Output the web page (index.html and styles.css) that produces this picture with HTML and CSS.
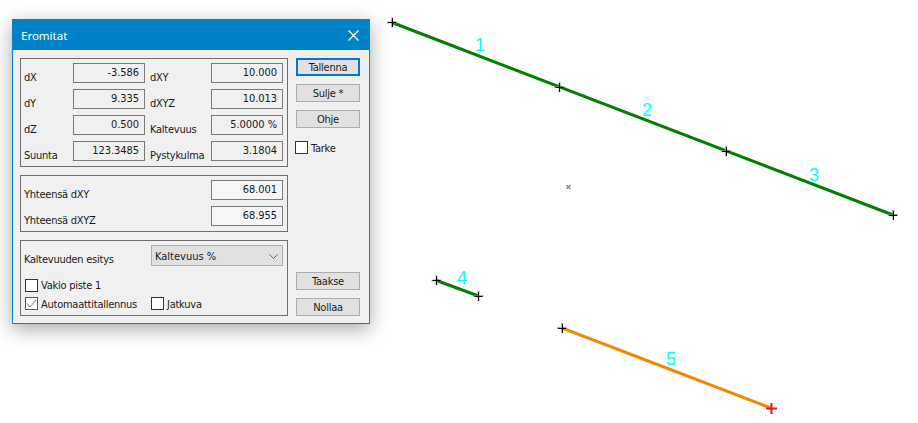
FILE: index.html
```html
<!DOCTYPE html>
<html>
<head>
  <title>Eromitat</title>
  <link rel="stylesheet" href="styles.css">
</head>
<body>
  <!-- drawing behind the dialog -->
  <svg class="drawing" width="918" height="423" viewBox="0 0 918 423">
    <g class="seg-green">
      <line x1="392" y1="22.5" x2="893" y2="215"/>
      <line x1="436.5" y1="280.5" x2="478.5" y2="296"/>
    </g>
    <line class="seg-orange" x1="562" y1="328" x2="771" y2="408"/>
    <path class="mark-soft" d="M387 22.5h10M392 17.5v10M554.5 87h10M559.5 82v10M721 151h10M726 146v10M888 215h10M893 210v10M431.5 280.5h10M436.5 275.5v10M473.5 296h10M478.5 291v10M557 328h10M562 323v10"/>
    <path class="mark" d="M388 22.5h8M392.5 18v9M555.5 87.5h8M559.5 83v9M722 151.5h8M726.5 147v9M889 215.5h8M893.5 211v9M432.5 280.5h8M436.5 276v9M474.5 296.5h8M478.5 292v9M558 328.5h8M562.5 324v9"/>
    <path class="mark-red" d="M766 408.5h11M771.5 403v11"/>
    <path class="mark-x" d="M566.5 185l4 4M570.5 185l-4 4"/>
    <g class="seg-label">
      <text x="480" y="51">1</text>
      <text x="647" y="116">2</text>
      <text x="814" y="181">3</text>
      <text x="462" y="284">4</text>
      <text x="671" y="365">5</text>
    </g>
  </svg>

  <div class="dialog">
    <div class="titlebar">
      <span>Eromitat</span>
      <svg class="close" width="11" height="11" viewBox="0 0 11 11"><path d="M.5.5l10 10M10.5.5l-10 10"/></svg>
    </div>
    <div class="dialog-body">
      <div class="groups">
        <div class="group grid-values">
          <div class="lbl">dX</div><div class="val">-3.586</div>
          <div class="lbl">dXY</div><div class="val">10.000</div>
          <div class="lbl">dY</div><div class="val">9.335</div>
          <div class="lbl">dXYZ</div><div class="val">10.013</div>
          <div class="lbl">dZ</div><div class="val">0.500</div>
          <div class="lbl">Kaltevuus</div><div class="val">5.0000 %</div>
          <div class="lbl">Suunta</div><div class="val">123.3485</div>
          <div class="lbl">Pystykulma</div><div class="val">3.1804</div>
        </div>
        <div class="group grid-totals">
          <div class="lbl">Yhteensä dXY</div><div class="val">68.001</div>
          <div class="lbl">Yhteensä dXYZ</div><div class="val">68.955</div>
        </div>
        <div class="group options">
          <div class="slope-row">
            <div class="slope-label">Kaltevuuden esitys</div>
            <div class="select">
              <span>Kaltevuus %</span>
              <svg width="9" height="5" viewBox="0 0 9 5"><path d="M.5.5l4 4 4-4"/></svg>
            </div>
          </div>
          <label class="check check-first"><i class="box"></i>Vakio piste 1</label>
          <div class="check-row">
            <label class="check check-auto"><i class="box box-on"><svg width="11" height="11" viewBox="0 0 11 11"><path d="M1 5.5l3 3.5 6-7"/></svg></i>Automaattitallennus</label>
            <label class="check"><i class="box"></i>Jatkuva</label>
          </div>
        </div>
      </div>
      <div class="buttons">
        <button class="btn btn-default">Tallenna</button>
        <button class="btn">Sulje *</button>
        <button class="btn">Ohje</button>
        <label class="check check-tarke"><i class="box"></i>Tarke</label>
        <div class="spacer"></div>
        <button class="btn">Taakse</button>
        <button class="btn">Nollaa</button>
      </div>
    </div>
  </div>
</body>
</html>
```

FILE: styles.css
```css
body { margin: 0; width: 918px; height: 423px; background: #fff; overflow: hidden; position: relative; font-family: "DejaVu Sans", sans-serif; font-stretch: condensed; font-size: 11px; letter-spacing: -.25px; color: #1a1a1a; }

.drawing { position: absolute; left: 0; top: 0; }
.seg-green line { stroke: #008000; stroke-width: 3; }
.seg-orange { stroke: #f08a05; stroke-width: 3; }
.mark-soft { stroke: #888; stroke-width: 2; fill: none; opacity: .7; }
.mark { stroke: #000; stroke-width: 1; fill: none; }
.mark-red { stroke: #f01020; stroke-width: 2; fill: none; }
.mark-x { stroke: #888; stroke-width: 1.5; fill: none; }
.seg-label text { fill: #00ffff; font-family: "Liberation Sans", sans-serif; font-size: 18px; letter-spacing: 0; text-anchor: middle; }

.dialog { position: absolute; left: 12px; top: 19px; width: 356px; height: 303px; border: 1px solid #0a84c6; background: #f0f0f0; box-shadow: 0 5px 18px rgba(0,0,0,.35); }
.titlebar { height: 30px; background: #0082c8; color: #fff; font-family: "Noto Sans", sans-serif; font-stretch: normal; font-size: 11.5px; letter-spacing: 0; display: flex; align-items: center; justify-content: space-between; padding: 0 10px 0 8px; }
.close path { stroke: #fff; stroke-width: 1.2; fill: none; }

.dialog-body { display: flex; padding: 8px 9px 0 7px; }
.groups { width: 268px; display: flex; flex-direction: column; gap: 8px; }
.group { border: 1px solid #6e6e6e; }

.grid-values { height: 109px; box-sizing: border-box; padding: 4px 4px 5px 3px; display: grid; grid-template-columns: 49px 72px 66px 72px; row-gap: 6px; grid-auto-rows: 20px; }
.grid-values .lbl:nth-child(4n+3) { padding-left: 5px; }
.grid-totals { height: 57px; box-sizing: border-box; padding: 4px 4px 5px 3px; display: grid; grid-template-columns: 1fr 72px; row-gap: 6px; grid-auto-rows: 20px; }

.lbl { height: 20px; line-height: 30px; white-space: nowrap; }
.val { height: 20px; box-sizing: border-box; border: 1px solid #7a7a7a; background: #f0f0f0; text-align: right; padding-right: 5px; line-height: 17px; letter-spacing: -.05px; }
.grid-totals .val { background: #f6f6f6; }

.options { height: 76px; box-sizing: border-box; padding: 4px 4px 0 3px; }
.slope-row { display: flex; height: 21px; }
.slope-label { width: 127px; line-height: 30px; }
.select { flex: 1; box-sizing: border-box; border: 1px solid #adadad; background: #e1e1e1; display: flex; align-items: center; justify-content: space-between; padding: 1px 4px 0 3px; letter-spacing: 0; }
.select path { stroke: #666; fill: none; }

.check { display: flex; align-items: flex-start; gap: 3px; height: 13px; line-height: 15px; white-space: nowrap; }
.check-first { margin: 13px 0 5px 1px; line-height: 14px; }
.check-row { display: flex; }
.check-auto { width: 126px; margin-left: 1px; }
.box { width: 13px; height: 13px; box-sizing: border-box; border: 1px solid #333; background: #fff; display: block; flex: none; }
.box-on { border-color: #555; }
.box-on svg { display: block; }
.box-on path { stroke: #777; stroke-width: 1; fill: none; }

.buttons { flex: 1; display: flex; flex-direction: column; margin-left: 8px; gap: 8px; }
.btn { width: 64px; height: 18px; padding: 2px 0 0; box-sizing: border-box; border: 1px solid #adadad; background: #e1e1e1; font: inherit; letter-spacing: inherit; color: inherit; line-height: 14px; }
.btn-default { border: 2px solid #0078d7; padding-top: 1px; }
.check-tarke { margin: 5px 0 0 -1px; }
.spacer { height: 102px; flex: none; }
```
